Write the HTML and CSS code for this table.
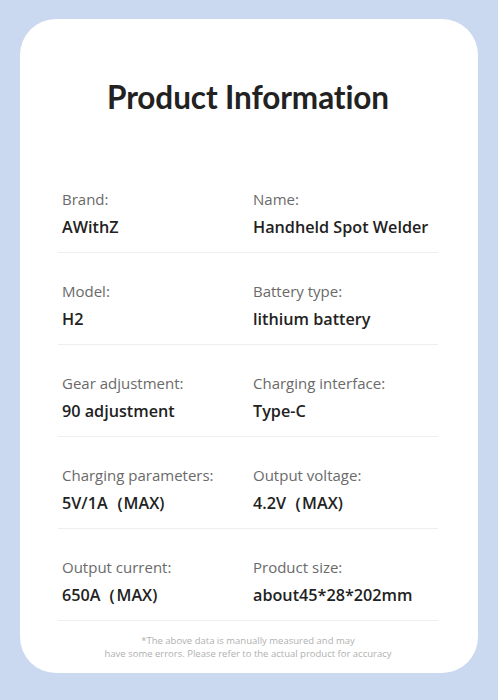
FILE: index.html
```html
<!DOCTYPE html>
<html>
<head>
<meta charset="utf-8">
<link rel="stylesheet" href="styles.css">
</head>
<body>
<div class="card">
  <h1 class="title">Product Information</h1>
  <div class="rows">
    <div class="row">
      <div class="cell"><div class="label">Brand:</div><div class="value">AWithZ</div></div>
      <div class="cell"><div class="label">Name:</div><div class="value">Handheld Spot Welder</div></div>
    </div>
    <div class="row">
      <div class="cell"><div class="label">Model:</div><div class="value">H2</div></div>
      <div class="cell"><div class="label">Battery type:</div><div class="value">lithium battery</div></div>
    </div>
    <div class="row">
      <div class="cell"><div class="label">Gear adjustment:</div><div class="value">90 adjustment</div></div>
      <div class="cell"><div class="label">Charging interface:</div><div class="value">Type-C</div></div>
    </div>
    <div class="row">
      <div class="cell"><div class="label">Charging parameters:</div><div class="value">5V/1A（MAX)</div></div>
      <div class="cell"><div class="label">Output voltage:</div><div class="value">4.2V（MAX)</div></div>
    </div>
    <div class="row">
      <div class="cell"><div class="label">Output current:</div><div class="value">650A（MAX)</div></div>
      <div class="cell"><div class="label">Product size:</div><div class="value">about45*28*202mm</div></div>
    </div>
  </div>
  <p class="note">*The above data is manually measured and may<br>have some errors. Please refer to the actual product for accuracy</p>
</div>
</body>
</html>
```
FILE: styles.css
```css
html, body {
  margin: 0;
  padding: 0;
  background: #cbd9f0;
}
body {
  padding: 19px 20px 27px 20px;
  font-family: "Open Sans", "Noto Sans", sans-serif;
}
.card {
  background: #ffffff;
  border-radius: 36px;
  padding: 60px 40px 14px 38px;
  height: 654px;
  box-sizing: border-box;
}
.title {
  margin: 0;
  text-align: center;
  font-family: "Lato", sans-serif;
  font-weight: 700;
  font-size: 31.5px;
  line-height: 36px;
  color: #222;
  letter-spacing: -0.1px;
}
.rows {
  margin-top: 74px;
}
.row {
  display: grid;
  grid-template-columns: 191px 1fr;
  border-bottom: 1.5px solid #eeeeee;
  padding: 0 0 14px 4px;
  margin-bottom: 28px;
}
.label {
  font-size: 15px;
  line-height: 20px;
  color: #6a6a6a;
  font-weight: 400;
}
.value {
  margin-top: 7px;
  font-size: 16.2px;
  line-height: 22px;
  color: #222;
  font-weight: 600;
}
.note {
  margin: -14px 0 0 0;
  text-align: center;
  font-size: 9.5px;
  line-height: 12.5px;
  color: #b0b0b0;
}
```
